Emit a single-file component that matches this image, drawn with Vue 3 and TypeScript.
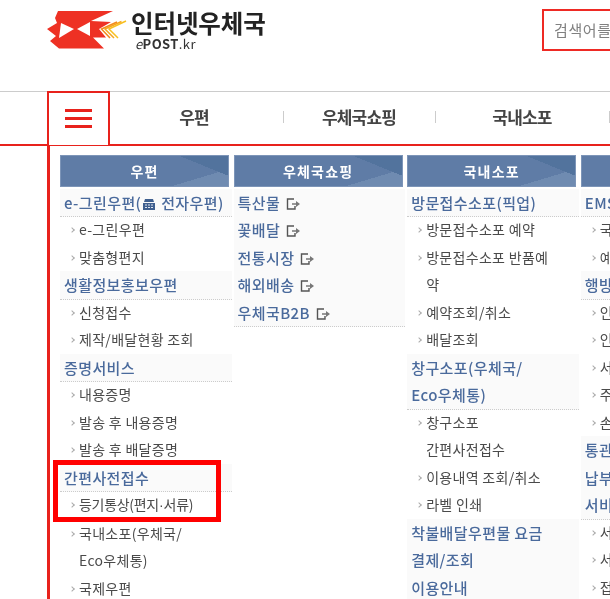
<script setup lang="ts">
interface MenuItem {
  text: string;
  type: "section" | "sub" | "link";
  icon?: boolean;
}

interface MenuColumn {
  title: string;
  items: MenuItem[];
}

const section = (text: string, icon = false): MenuItem => ({ text, type: "section", icon });
const sub = (text: string): MenuItem => ({ text, type: "sub" });
const link = (text: string): MenuItem => ({ text, type: "link" });

const tabs = [
  { label: "우편", width: 174 },
  { label: "우체국쇼핑", width: 152 },
  { label: "국내소포", width: 174 },
];

const columns: MenuColumn[] = [
  {
    title: "우편",
    items: [
      section("e-그린우편(", true),
      sub("e-그린우편"),
      sub("맞춤형편지"),
      section("생활정보홍보우편"),
      sub("신청접수"),
      sub("제작/배달현황 조회"),
      section("증명서비스"),
      sub("내용증명"),
      sub("발송 후 내용증명"),
      sub("발송 후 배달증명"),
      section("간편사전접수"),
      sub("등기통상(편지·서류)"),
      sub("국내소포(우체국/\nEco우체통)"),
      sub("국제우편"),
    ],
  },
  {
    title: "우체국쇼핑",
    items: [link("특산물"), link("꽃배달"), link("전통시장"), link("해외배송"), link("우체국B2B")],
  },
  {
    title: "국내소포",
    items: [
      section("방문접수소포(픽업)"),
      sub("방문접수소포 예약"),
      sub("방문접수소포 반품예\n약"),
      sub("예약조회/취소"),
      sub("배달조회"),
      section("창구소포(우체국/\nEco우체통)"),
      sub("창구소포\n간편사전접수"),
      sub("이용내역 조회/취소"),
      sub("라벨 인쇄"),
      section("착불배달우편물 요금\n결제/조회"),
      section("이용안내"),
    ],
  },
  {
    title: "국제우편",
    items: [
      section("EMS"),
      sub("국제특급 예약"),
      sub("예약조회"),
      section("행방조회"),
      sub("인터넷 조회"),
      sub("인수 확인"),
      sub("서비스 안내"),
      sub("주소 안내"),
      sub("손해배상"),
      section("통관대행\n납부 안내"),
      section("서비스"),
      sub("서비스 안내"),
      sub("서비스 이용"),
      sub("접수 안내"),
    ],
  },
];
</script>

<template>
  <div class="page">
    <header class="top">
      <div class="logo">
        <svg class="logo-mark" width="80" height="38" viewBox="0 0 80 38">
          <polygon
            points="11,0 66,0 44,10 64,11 52,18 59,26.5 46,26.5 57,37.5 12,37.5 3,30 9,25 0,18 10,12 8,7"
            fill="#ee3124"
          />
          <polygon points="14,12 27,18 12,27" fill="#fff" />
          <polygon points="30,18 43,11 43,25" fill="#fff" />
          <polyline points="79,10 62,18 71,27" fill="none" stroke="#f8c020" stroke-width="1.5" />
          <polyline points="74.5,10.5 58,18 67,27" fill="none" stroke="#f6a81e" stroke-width="1.5" />
          <polyline points="70,11 54.5,18 63,27" fill="none" stroke="#f28a1c" stroke-width="1.5" />
        </svg>
        <div class="logo-text">
          <div class="logo-name">인터넷우체국</div>
          <div class="logo-sub"><i>e</i><b>POST</b>.kr</div>
        </div>
      </div>
      <div class="search">검색어를 입력하세요</div>
    </header>

    <nav class="nav">
      <button class="menu-btn" type="button" aria-label="전체메뉴">
        <span></span><span></span><span></span>
      </button>
      <div v-for="tab in tabs" :key="tab.label" class="tab" :style="{ width: tab.width + 'px' }">
        {{ tab.label }}
      </div>
    </nav>

    <main class="panel">
      <section v-for="col in columns" :key="col.title" class="col">
        <h2 class="col-title">{{ col.title }}</h2>
        <ul class="list">
          <li
            v-for="item in col.items"
            :key="item.text"
            :class="[item.type, { tight: item.text.includes('·') }]"
          >
            <template v-for="(part, i) in item.text.split('·')" :key="i"><span v-if="i > 0" class="dot">·</span>{{ part }}</template>
            <template v-if="item.icon">
              <svg class="mini" width="14" height="11" viewBox="0 0 14 11">
                <path d="M3 0h8l1 3H2zM1 4h12v7H1z" fill="#3f5f8f" />
                <path d="M3 5.5h2v1H3zM6 5.5h2v1H6zM9 5.5h2v1H9zM3 8h2v1H3zM6 8h2v1H6zM9 8h2v1H9z" fill="#dfe6f0" />
              </svg>
              전자우편)</template>
            <svg v-if="item.type === 'link'" class="ext" width="15" height="12" viewBox="0 0 15 12">
              <path d="M8 1H1.5v10H9V8" fill="none" stroke="#555" stroke-width="1.4" />
              <path d="M6 5.2h4V3l4 3-4 3V6.8H6z" fill="#777" />
            </svg>
          </li>
        </ul>
      </section>
      <div class="highlight"></div>
    </main>
  </div>
</template>

<style scoped>
.page {
  position: relative;
  width: 610px;
  height: 599px;
  overflow: hidden;
  background: #fff;
  font-family: "Noto Sans CJK KR", "Noto Sans", sans-serif;
  filter: blur(0.3px);
}

.top {
  display: flex;
  justify-content: space-between;
  height: 91px;
  padding-left: 47px;
  box-sizing: border-box;
}

.logo {
  display: flex;
  align-items: flex-start;
  padding-top: 11px;
}

.logo-text {
  margin-left: 4px;
  margin-top: -1px;
}

.logo-name {
  font-size: 24.5px;
  font-weight: 700;
  line-height: 26px;
  letter-spacing: -0.1px;
  color: #222;
}

.logo-sub {
  margin-left: 4px;
  margin-top: 1px;
  font-size: 13px;
  line-height: 14px;
  letter-spacing: 0.4px;
  color: #333;
}

.search {
  width: 200px;
  height: 42px;
  margin: 9px -132px 0 0;
  padding-left: 10px;
  box-sizing: border-box;
  border: 2px solid #ee2a24;
  font-size: 15px;
  line-height: 38px;
  letter-spacing: 0.6px;
  color: #808080;
  white-space: nowrap;
  overflow: hidden;
}

.nav {
  display: flex;
  height: 55px;
  padding-left: 47px;
  box-sizing: border-box;
  border-top: 1px solid #ccc;
  border-bottom: 2px solid #e8221c;
}

.menu-btn {
  display: flex;
  flex-direction: column;
  justify-content: flex-start;
  align-items: center;
  gap: 5px;
  width: 63px;
  height: 54px;
  margin-top: -1px;
  padding: 16px 0 0;
  box-sizing: border-box;
  border: 2px solid #e8221c;
  border-bottom: none;
  background: #fff;
  flex-shrink: 0;
}

.menu-btn span {
  display: block;
  width: 27px;
  height: 3px;
  background: #e8221c;
}

.tab {
  position: relative;
  flex-shrink: 0;
  padding-right: 2px;
  box-sizing: border-box;
  font-size: 17px;
  font-weight: 700;
  line-height: 50px;
  letter-spacing: -0.8px;
  text-align: center;
  color: #444;
}

.menu-btn + .tab {
  padding-right: 6px;
}

.tab::after {
  content: "";
  position: absolute;
  right: 0;
  top: 19px;
  width: 1px;
  height: 12px;
  background: #ccc;
}

.panel {
  position: relative;
  display: flex;
  gap: 2px;
  height: 453px;
  margin-left: 47px;
  padding: 9px 0 0 10px;
  box-sizing: border-box;
  border-left: 3px solid #e8221c;
}

.col {
  flex: 0 0 171.6px;
}

.col-title {
  width: 169px;
  height: 32px;
  margin: 0 0 1.5px;
  font-size: 14px;
  font-weight: 700;
  line-height: 32px;
  letter-spacing: 1.2px;
  text-align: center;
  color: #fff;
  background-color: #5f7ca6;
  background-image:
    linear-gradient(to top right, transparent 50%, #52739d 50%),
    linear-gradient(to bottom right, transparent 50%, #6f8bb1 50%);
  background-size: 52px 21px, 60px 18px;
  background-position: right top, right bottom;
  background-repeat: no-repeat;
  box-shadow: inset 0 0 0 1px #7d95b8;
}

.list {
  margin: 0;
  padding: 0;
  list-style: none;
}

.list li {
  box-sizing: border-box;
  min-height: 27.5px;
  line-height: 27.5px;
  white-space: pre-line;
}

.list .section,
.list .link {
  padding-left: 4px;
  margin-bottom: -1px;
  font-size: 15px;
  font-weight: 500;
  letter-spacing: 0.4px;
  color: #4a6a9c;
  background: #fafafa;
  border-bottom: 1px dotted #ccc;
}

.sub {
  position: relative;
  padding-left: 19px;
  font-size: 14px;
  letter-spacing: 0.3px;
  color: #4a4a4a;
}

.sub.tight {
  letter-spacing: -0.3px;
}

.sub::before {
  content: "";
  position: absolute;
  left: 10px;
  top: 12px;
  width: 3px;
  height: 3px;
  border-top: 1px solid #aaa;
  border-right: 1px solid #aaa;
  transform: rotate(45deg);
}

.dot {
  font-family: "Liberation Sans", sans-serif;
  letter-spacing: 0;
}

.mini {
  margin: 0 1px;
  vertical-align: -1px;
}

.ext {
  margin-left: 6px;
  vertical-align: -1px;
}

.highlight {
  position: absolute;
  left: 3px;
  top: 314px;
  width: 168px;
  height: 62px;
  box-sizing: border-box;
  border: 5px solid #f00;
}
</style>
